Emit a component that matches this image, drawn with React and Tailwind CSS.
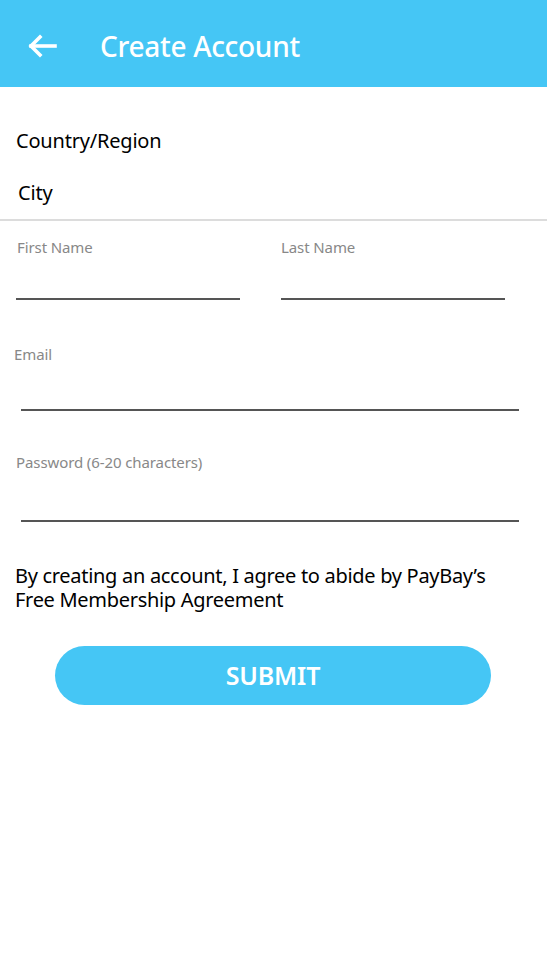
import React from "react";

export default function App() {
  return (
    <div
      className="w-[547px] h-[960px] bg-white overflow-hidden"
      style={{ fontFamily: '"Noto Sans", "Open Sans", sans-serif' }}
    >
      <div className="h-[87px] bg-[#45c6f5] flex items-center">
        <svg
          width="30"
          height="24"
          viewBox="0 0 30 24"
          className="ml-[27px] mt-[5px]"
          fill="none"
          stroke="white"
          strokeWidth="3.6"
          strokeLinecap="square"
        >
          <path d="M28 12H4" />
          <path d="M13 3L4 12l9 9" />
        </svg>
        <h1 className="ml-[43px] text-[28px] font-medium text-white tracking-[-0.3px] mt-[4px]">
          Create Account
        </h1>
      </div>

      <div className="pt-[44px] text-[20px] text-black leading-none">
        <p className="pl-[16px] h-[44px] tracking-[-0.2px]">Country/Region</p>
        <p className="pl-[18px] h-[36px] mt-[8px] tracking-[-0.2px]">City</p>
      </div>
      <div className="h-[2px] bg-[#dcdcdc]" />

      <div className="flex pt-[19px]">
        <div className="pl-[16px] w-[281px]">
          <p className="pl-[1px] text-[15px] text-[#888] leading-none tracking-[-0.1px]">First Name</p>
          <div className="mt-[43px] w-[224px] h-[2px] bg-[#555]" />
        </div>
        <div>
          <p className="text-[15px] text-[#888] leading-none tracking-[-0.1px]">Last Name</p>
          <div className="mt-[43px] w-[224px] h-[2px] bg-[#555]" />
        </div>
      </div>

      <div className="mt-[47px]">
        <p className="pl-[14px] text-[15px] text-[#888] leading-none tracking-[-0.1px]">Email</p>
        <div className="ml-[21px] mt-[47px] w-[498px] h-[2px] bg-[#555]" />
      </div>

      <div className="mt-[44px]">
        <p className="pl-[16px] text-[15px] text-[#888] leading-none tracking-[-0.1px]">
          Password (6-20 characters)
        </p>
        <div className="ml-[21px] mt-[50px] w-[498px] h-[2px] bg-[#555]" />
      </div>

      <div className="mt-[42px] pl-[15px] text-[20px] leading-[24px] text-black tracking-[-0.3px]">
        <p>By creating an account, I agree to abide by PayBay’s</p>
        <p>Free Membership Agreement</p>
      </div>

      <div className="mt-[34px] pl-[55px]">
        <button className="w-[436px] h-[59px] rounded-full bg-[#45c6f5] text-white text-[25px] font-semibold tracking-[-0.2px]">
          SUBMIT
        </button>
      </div>
    </div>
  );
}
